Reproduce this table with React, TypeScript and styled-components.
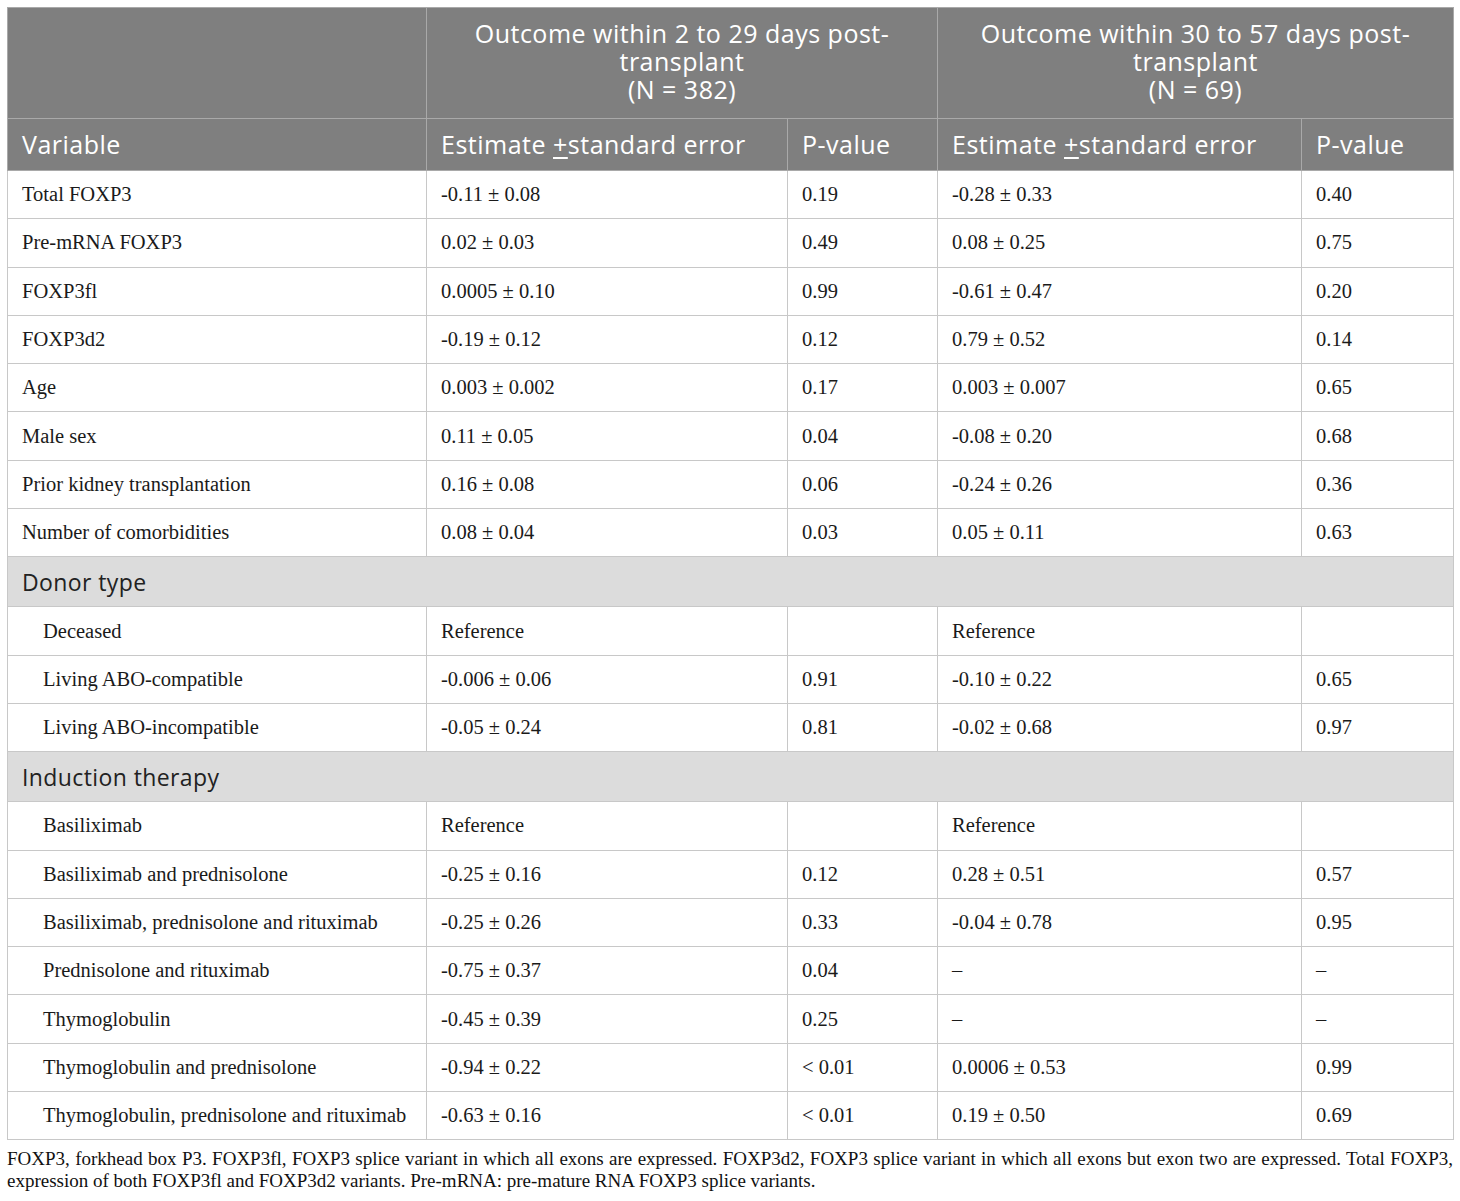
import React from "react";
import styled, { createGlobalStyle } from "styled-components";

const Global = createGlobalStyle`
  html, body { margin: 0; padding: 0; background: #fff; }
  body { padding: 7px 8px 0 7px; }
`;

const Wrap = styled.div`
  width: 1446px;
`;

const Table = styled.table`
  width: 1446px;
  border-collapse: collapse;
  table-layout: fixed;
  border: 1px solid #c8c8c8;
`;

const HeadCell = styled.th<{ $center?: boolean }>`
  background: #7f7f7f;
  color: #fff;
  font-family: "Open Sans", "Noto Sans", sans-serif;
  font-weight: 400;
  font-size: 25px;
  letter-spacing: 0.5px;
  line-height: 28px;
  text-align: ${(p) => (p.$center ? "center" : "left")};
  padding: ${(p) => (p.$center ? "11px 10px 15px" : "11px 14px 12px")};
  border: 1px solid #a9a9a9;
  vertical-align: middle;
`;

const Cell = styled.td<{ $indent?: boolean }>`
  font-family: "Liberation Serif", "Times New Roman", serif;
  font-size: 20.5px;
  color: #1a1a1a;
  height: 47.3px;
  padding: 0 14px 0 ${(p) => (p.$indent ? "35px" : "14px")};
  border: 1px solid #c8c8c8;
  vertical-align: middle;
  white-space: nowrap;
`;

const SectionCell = styled.td`
  background: #dcdcdc;
  font-family: "Open Sans", "Noto Sans", sans-serif;
  font-size: 23px;
  letter-spacing: 0.4px;
  color: #222;
  height: 49px;
  padding: 0 14px;
  border: 1px solid #c8c8c8;
  vertical-align: middle;
`;

const Footer = styled.p`
  margin: 8px 0 0;
  font-family: "Liberation Serif", "Times New Roman", serif;
  font-size: 19px;
  line-height: 22px;
  color: #111;
  text-align: justify;
`;

type Row =
  | { kind: "data"; label: string; indent?: boolean; v: [string, string, string, string] }
  | { kind: "section"; label: string };

const rows: Row[] = [
  { kind: "data", label: "Total FOXP3", v: ["-0.11 ± 0.08", "0.19", "-0.28 ± 0.33", "0.40"] },
  { kind: "data", label: "Pre-mRNA FOXP3", v: ["0.02 ± 0.03", "0.49", "0.08 ± 0.25", "0.75"] },
  { kind: "data", label: "FOXP3fl", v: ["0.0005 ± 0.10", "0.99", "-0.61 ± 0.47", "0.20"] },
  { kind: "data", label: "FOXP3d2", v: ["-0.19 ± 0.12", "0.12", "0.79 ± 0.52", "0.14"] },
  { kind: "data", label: "Age", v: ["0.003 ± 0.002", "0.17", "0.003 ± 0.007", "0.65"] },
  { kind: "data", label: "Male sex", v: ["0.11 ± 0.05", "0.04", "-0.08 ± 0.20", "0.68"] },
  { kind: "data", label: "Prior kidney transplantation", v: ["0.16 ± 0.08", "0.06", "-0.24 ± 0.26", "0.36"] },
  { kind: "data", label: "Number of comorbidities", v: ["0.08 ± 0.04", "0.03", "0.05 ± 0.11", "0.63"] },
  { kind: "section", label: "Donor type" },
  { kind: "data", indent: true, label: "Deceased", v: ["Reference", "", "Reference", ""] },
  { kind: "data", indent: true, label: "Living ABO-compatible", v: ["-0.006 ± 0.06", "0.91", "-0.10 ± 0.22", "0.65"] },
  { kind: "data", indent: true, label: "Living ABO-incompatible", v: ["-0.05 ± 0.24", "0.81", "-0.02 ± 0.68", "0.97"] },
  { kind: "section", label: "Induction therapy" },
  { kind: "data", indent: true, label: "Basiliximab", v: ["Reference", "", "Reference", ""] },
  { kind: "data", indent: true, label: "Basiliximab and prednisolone", v: ["-0.25 ± 0.16", "0.12", "0.28 ± 0.51", "0.57"] },
  { kind: "data", indent: true, label: "Basiliximab, prednisolone and rituximab", v: ["-0.25 ± 0.26", "0.33", "-0.04 ± 0.78", "0.95"] },
  { kind: "data", indent: true, label: "Prednisolone and rituximab", v: ["-0.75 ± 0.37", "0.04", "–", "–"] },
  { kind: "data", indent: true, label: "Thymoglobulin", v: ["-0.45 ± 0.39", "0.25", "–", "–"] },
  { kind: "data", indent: true, label: "Thymoglobulin and prednisolone", v: ["-0.94 ± 0.22", "< 0.01", "0.0006 ± 0.53", "0.99"] },
  { kind: "data", indent: true, label: "Thymoglobulin, prednisolone and rituximab", v: ["-0.63 ± 0.16", "< 0.01", "0.19 ± 0.50", "0.69"] },
];

const Under = styled.span`
  text-decoration: underline;
  text-underline-offset: 3px;
`;

export default function App() {
  return (
    <Wrap>
      <Global />
      <Table>
        <colgroup>
          <col style={{ width: 419 }} />
          <col style={{ width: 361 }} />
          <col style={{ width: 150 }} />
          <col style={{ width: 364 }} />
          <col style={{ width: 152 }} />
        </colgroup>
        <thead>
          <tr>
            <HeadCell />
            <HeadCell $center colSpan={2}>
              Outcome within 2 to 29 days post-
              <br />
              transplant
              <br />
              (N = 382)
            </HeadCell>
            <HeadCell $center colSpan={2}>
              Outcome within 30 to 57 days post-
              <br />
              transplant
              <br />
              (N = 69)
            </HeadCell>
          </tr>
          <tr>
            <HeadCell>Variable</HeadCell>
            <HeadCell>
              Estimate <Under>+</Under>standard error
            </HeadCell>
            <HeadCell>P-value</HeadCell>
            <HeadCell>
              Estimate <Under>+</Under>standard error
            </HeadCell>
            <HeadCell>P-value</HeadCell>
          </tr>
        </thead>
        <tbody>
          {rows.map((r, i) =>
            r.kind === "section" ? (
              <tr key={i}>
                <SectionCell colSpan={5}>{r.label}</SectionCell>
              </tr>
            ) : (
              <tr key={i}>
                <Cell $indent={r.indent}>{r.label}</Cell>
                {r.v.map((x, j) => (
                  <Cell key={j}>{x}</Cell>
                ))}
              </tr>
            )
          )}
        </tbody>
      </Table>
      <Footer>
        FOXP3, forkhead box P3. FOXP3fl, FOXP3 splice variant in which all exons are expressed. FOXP3d2, FOXP3 splice
        variant in which all exons but exon two are expressed. Total FOXP3, expression of both FOXP3fl and FOXP3d2
        variants. Pre-mRNA: pre-mature RNA FOXP3 splice variants.
      </Footer>
    </Wrap>
  );
}
